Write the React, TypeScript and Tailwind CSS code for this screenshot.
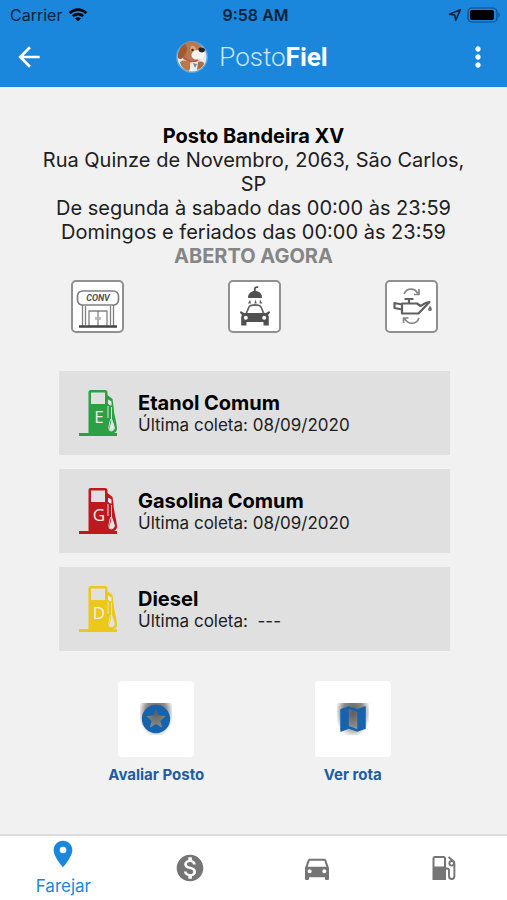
import { useState, type ReactNode } from "react";
import {
  MdArrowBack,
  MdDirectionsCar,
  MdMap,
  MdMonetizationOn,
  MdMoreVert,
  MdPlace,
  MdStars,
} from "react-icons/md";

function WifiIcon() {
  return (
    <svg viewBox="0 0 20 15" className="h-[15px] w-5" fill="currentColor" aria-hidden="true">
      <path d="M10 3.1c2.6 0 5.1 1 7 2.8.2.1.4.1.5 0l1.4-1.4c.2-.2.2-.5 0-.7C14 -.9 6-.9 1.1 3.8c-.2.2-.2.5 0 .7l1.4 1.4c.1.1.3.1.5 0 1.9-1.8 4.4-2.8 7-2.8z" />
      <path d="M10 7.6c1.4 0 2.8.5 3.8 1.5.2.1.4.1.5 0l1.4-1.4c.2-.2.2-.5 0-.7-3.2-3-8.2-3-11.400 0-.2.2-.2.5 0 .7l1.400 1.400c.1.1.3.1.5 0 1-1 2.400-1.500 3.800-1.500z" />
      <path d="M12.7 10.7c.2-.2.2-.5 0-.6-1.500-1.300-3.900-1.300-5.400 0-.2.1-.2.400 0 .6l2.400 2.400c.2.2.4.2.6 0z" />
    </svg>
  );
}

function LocationIcon() {
  return (
    <svg viewBox="0 0 14 14" className="size-[14px]" fill="none" stroke="currentColor" strokeWidth="1.5" strokeLinejoin="round" aria-hidden="true">
      <path d="M12.400 1.600 1.500 6.200l5.300.9.900 5.300z" />
    </svg>
  );
}

function BatteryIcon() {
  return (
    <svg viewBox="0 0 34 16" className="h-4 w-[34px]" aria-hidden="true">
      <rect x="1" y="1" width="29" height="14" rx="4" fill="none" stroke="#0d4f88" strokeWidth="1.2" />
      <rect x="3" y="3" width="24" height="10" rx="2" fill="#000" />
      <path d="M31.5 5.500c1.600.8 1.600 4.200 0 5z" fill="#0d4f88" />
    </svg>
  );
}

function DogLogo() {
  return (
    <svg viewBox="0 0 34 34" className="size-[34px]" aria-hidden="true">
      <circle cx="17" cy="17" r="16" fill="#8ec8f0" opacity=".5" />
      <circle cx="17" cy="17" r="14.500" fill="#dfeaf3" />
      <path d="M9 4c5-4 14-3 18 3l2 5-4 8-9 3-8-4z" fill="#b97950" />
      <path d="M10 4C5 6 2 13 3 18c2 2 5 1 7-3 2-4 3-9 0-11z" fill="#a4582e" />
      <path d="M16 6c3-1 5 1 5 4-2 2-5 2-6 0z" fill="#dfa578" />
      <path d="M17 13c3-4 10-4 12-1 2 4-1 8-6 8-4 0-8-3-6-7z" fill="#f8f4ef" />
      <path d="M24 8c3-1 6 0 6 2s-3 3-5 2-2-3-1-4z" fill="#292324" />
      <circle cx="17.500" cy="10" r="1.200" fill="#33231c" />
      <path d="M9 17c3 4 9 6 14 3" fill="none" stroke="#c64b42" strokeWidth="1.500" />
      <path d="M5 22c4-3 9-1 12 2l-3 7c-5-1-8-4-9-9z" fill="#bd7746" />
      <path d="M15 23c4-2 8-1 9 2-1 4-5 6-9 6z" fill="#f4efe9" />
      <path d="M23 22c4-1 6 0 6 2-1 3-4 5-7 6z" fill="#b46c3e" />
      <path d="m18 23 4 1-2 4z" fill="#668cae" />
    </svg>
  );
}

function StoreIcon() {
  return (
    <svg viewBox="0 0 48 48" className="size-12" fill="none" stroke="#808080" strokeWidth="1.700" aria-hidden="true">
      <rect x="3.500" y="8" width="41" height="14" rx="5" fill="#fff" />
      <path d="M8.500 22v21M39.500 22v21M15 43V28h18v15M24 28v15M11.500 23v19M36.500 23v19" strokeWidth="1.300" />
      <path d="M22 34v3M26 34v3" strokeWidth="1" />
      <path d="M5 43.500h38" stroke="#444" strokeWidth="2.400" />
      <text x="24" y="18" textAnchor="middle" fill="#505050" stroke="none" className="font-['Roboto',sans-serif] text-[9px] font-bold italic">CONV</text>
    </svg>
  );
}

function CarWashIcon() {
  return (
    <svg viewBox="0 0 48 48" className="size-12" fill="#505050" aria-hidden="true">
      <path d="M17 15c0-4.500 3-6.500 6-7V6c0-2 1.500-3 4.500-2.500l-.5 1.500c-1.500-.3-2.300 0-2.300 1v2c4 .5 6.300 2.500 6.300 7z" />
      <path d="m19 16.500-2 4h3zM24.500 16.500l-1.300 4h2.600zM29 16.500l-.5 4h3z" fill="#666" />
      <path d="m15 31 3-7c.7-1.600 1.800-2 6-2s5.300.4 6 2l3 7z" fill="#fff" stroke="#686868" strokeWidth="1.800" />
      <path fillRule="evenodd" d="M13 30h22l2.300-1.500H39c0 1.800-.8 2.700-2 3l.8 2.500v8.500h-5.300V39h-17v3.500h-5.300V34l.8-2.500c-1.200-.3-2-1.200-2-3h1.700zm1.800 2.700a2 2 0 1 0 .01 4 2 2 0 0 0 0-4zm18.400 0a2 2 0 1 0 .01 4 2 2 0 0 0 0-4z" />
    </svg>
  );
}

function OilIcon() {
  return (
    <svg viewBox="0 0 48 48" className="size-12" fill="none" stroke="#606060" strokeWidth="2.200" strokeLinejoin="round" aria-hidden="true">
      <path d="M14 21.500 6.500 20v5l7.500 1.500M14 20.500h15l3.500 2.500c3-1.200 4-4 9-4L30.500 30.500H14zM21 20v-4M16.500 16h9" />
      <path d="M16 11c3-6.500 11-6.500 14 0M31 6v5.500h-5M31 35c-2.500 7-11.500 7-14.500 0M15.500 40v-5h5" stroke="#858585" strokeWidth="1.700" />
      <path d="M42 22.500c-3 4-2 5.500 0 5.500s3-1.500 0-5.500z" fill="#777" stroke="none" />
    </svg>
  );
}

function FuelPumpIcon({ color, letter }: { color: string; letter: string }) {
  return (
    <svg viewBox="0 0 38 47" className="h-[47px] w-[38px] shrink-0" fill="none" aria-hidden="true">
      <path fillRule="evenodd" fill={color} d="M11.500 0H26q2.500 0 2.500 2.500V5l5 4 1 7c0 7 3 15 3.500 22 0 3-1 4-3 5h3v3H0v-3h9.500V2q0-2 2-2zm.5 2.500V14h14V2.500z" />
      <path d="M29 9.500v4c1.500 2 2.500 2 3.500 2v-4z" fill="#e8e8e8" />
      <path d="M32.500 17v12l3 9q-1 3-3 3-3 0-3-3l2-9M29 16v12" stroke="#dedede" strokeWidth="1" />
      <path d="M32.500 29c2 5 4 9 2 11-1 1-3 1-4 0-1-2 2-6 2-11z" fill="#e3e3e3" />
      <path d="M30.800 17v9c0 4-3 8-1.800 14" stroke={color} strokeWidth="1" />
      <text x="20" y="33" textAnchor="middle" fill="#eee" className="font-['Open_Sans',sans-serif] text-[17px]">{letter}</text>
    </svg>
  );
}

function StationIcon() {
  return (
    <svg viewBox="0 0 24 26" className="h-[26px] w-6" fill="none" stroke="#757575" strokeWidth="1.900" aria-hidden="true">
      <path fill="#757575" fillRule="evenodd" stroke="none" d="M2.500 1h9Q14 1 14 3.500V25H.5V3.500Q.5 1 2.500 1zm0 2v8.500H12V3z" />
      <path d="M13.500 13.500H15q2 0 2 2v5.500q0 3 2.700 3t2.700-3V8.500q0-1.300-1-2.300L16.500 2" />
      <circle cx="19.700" cy="8.300" r="2.300" />
    </svg>
  );
}

const services = [
  { name: "Loja de conveniência", icon: <StoreIcon /> },
  { name: "Lava-rápido", icon: <CarWashIcon /> },
  { name: "Troca de óleo", icon: <OilIcon /> },
];

const fuels = [
  { name: "Etanol Comum", date: "08/09/2020", color: "#2ca044", letter: "E" },
  { name: "Gasolina Comum", date: "08/09/2020", color: "#bf1920", letter: "G" },
  { name: "Diesel", date: "\u00a0---", color: "#ecc81b", letter: "D" },
];

function Action({ label, children }: { label: string; children: ReactNode }) {
  return (
    <button type="button" className="flex flex-1 flex-col items-center gap-2 text-[15px] leading-5 font-bold text-[#1c5da5]">
      <span className="flex size-[76px] items-center justify-center rounded bg-white">
        <span className="flex size-8 items-center justify-center bg-[radial-gradient(ellipse_at_50%_30%,#5c5c5c_0%,#8a8a8a_45%,transparent_78%)] text-[#1762ad]">
          {children}
        </span>
      </span>
      {label}
    </button>
  );
}

const tabs = [
  { name: "Farejar", icon: <MdPlace className="size-8" /> },
  { name: "Preços", icon: <MdMonetizationOn className="size-8" /> },
  { name: "Veículos", icon: <MdDirectionsCar className="size-8" /> },
  { name: "Postos", icon: <StationIcon /> },
];

export default function App() {
  const [active, setActive] = useState("Farejar");

  return (
    <div className="flex min-h-screen flex-col bg-[#f1f1f1] font-['Inter',sans-serif] text-[#202020]">
      <header className="bg-[#1a86dc] pb-[3px]">
        <div className="grid h-[30px] grid-cols-3 items-center pr-[6px] pl-[10px] text-base text-[#09233a]">
          <div className="flex items-center gap-[6px]">
            Carrier
            <span className="text-black"><WifiIcon /></span>
          </div>
          <div className="text-center font-semibold">9:58 AM</div>
          <div className="flex items-center justify-end gap-[5px]">
            <LocationIcon />
            <BatteryIcon />
          </div>
        </div>
        <div className="flex h-[54px] items-center justify-between px-[13px] text-white">
          <button type="button" aria-label="Voltar"><MdArrowBack className="size-8" /></button>
          <div className="flex items-center gap-[10px] pr-1 font-['Roboto',sans-serif] text-[26px] leading-8">
            <DogLogo />
            <h1 className="font-light text-[#cce7fa]">Posto<strong className="font-bold text-white">Fiel</strong></h1>
          </div>
          <button type="button" aria-label="Mais opções"><MdMoreVert className="size-8" /></button>
        </div>
      </header>

      <main className="flex-1 pt-[37px] pb-12">
        <section className="px-10 text-center text-xl leading-6">
          <h2 className="font-bold text-black">Posto Bandeira XV</h2>
          <p>Rua Quinze de Novembro, 2063, São Carlos, SP</p>
          <p>De segunda à sabado das 00:00 às 23:59</p>
          <p>Domingos e feriados das 00:00 às 23:59</p>
          <p className="font-bold text-[#858585]">ABERTO AGORA</p>
        </section>

        <ul className="mt-3 grid grid-cols-3 pr-[17px] pl-[19px]">
          {services.map((service) => (
            <li key={service.name} aria-label={service.name} className="flex justify-center">
              <span className="flex size-[53px] items-center justify-center rounded-[5px] border-2 border-[#909090] bg-white">{service.icon}</span>
            </li>
          ))}
        </ul>

        <ul className="mt-[38px] mr-[57px] ml-[59px] flex flex-col gap-[14px]">
          {fuels.map((fuel) => (
            <li key={fuel.name} className="flex h-[84px] items-center gap-[21px] bg-[#e0e0e0] px-5">
              <FuelPumpIcon color={fuel.color} letter={fuel.letter} />
              <div>
                <h3 className="text-xl leading-6 font-bold text-black">{fuel.name}</h3>
                <p className="text-[17px] leading-5">Última coleta: {fuel.date}</p>
              </div>
            </li>
          ))}
        </ul>

        <div className="mt-[30px] flex pr-[56px] pl-[58px]">
          <Action label="Avaliar Posto"><MdStars className="size-[34px] shrink-0" /></Action>
          <Action label="Ver rota"><MdMap className="size-[34px] shrink-0" /></Action>
        </div>
      </main>

      <nav className="grid h-[66px] grid-cols-4 border-t-2 border-[#dcdcdc] bg-white">
        {tabs.map((tab) => (
          <button
            key={tab.name}
            type="button"
            aria-label={tab.name}
            onClick={() => setActive(tab.name)}
            className={active === tab.name ? "flex flex-col items-center justify-center gap-1 text-[17px] leading-6 text-[#1a86dc]" : "flex flex-col items-center justify-center text-[#757575]"}
          >
            {tab.icon}
            {active === tab.name && <span>{tab.name}</span>}
          </button>
        ))}
      </nav>
    </div>
  );
}
